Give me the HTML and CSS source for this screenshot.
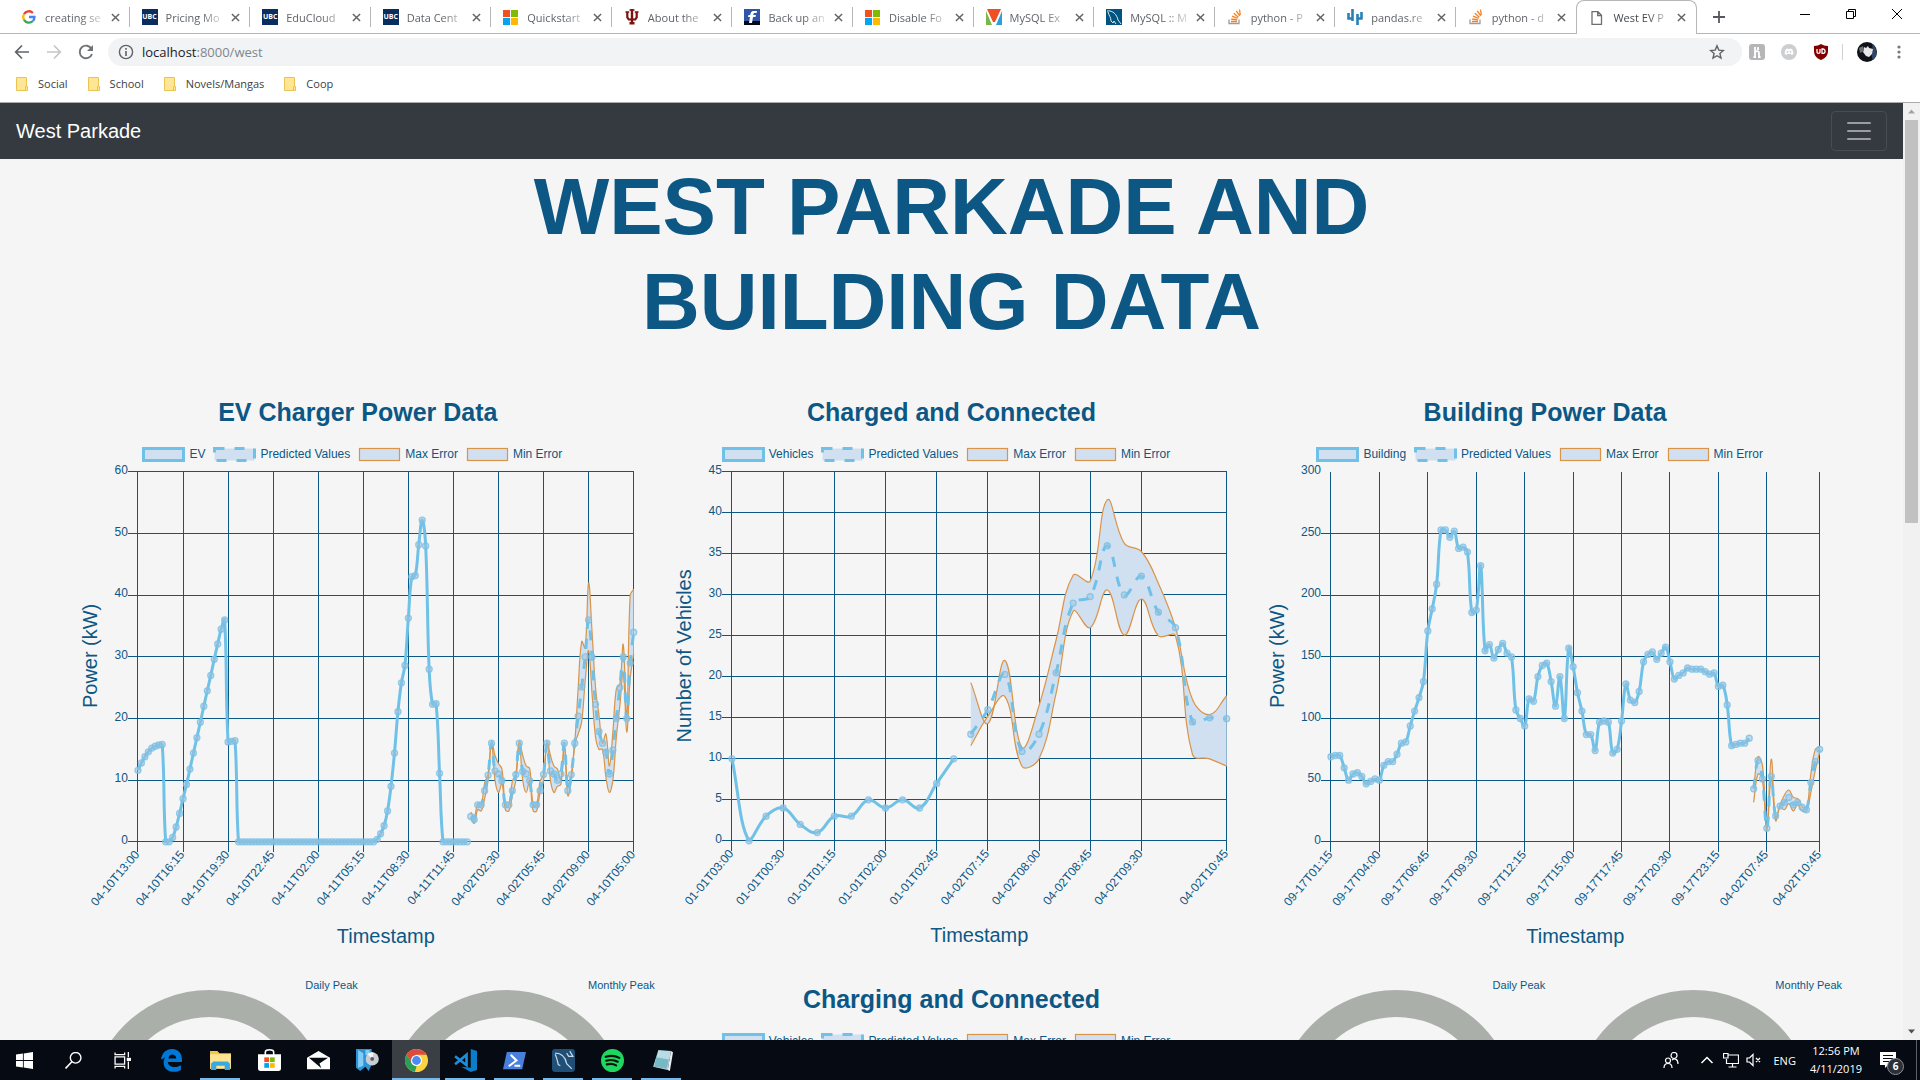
FILE: index.html
```html
<!DOCTYPE html>
<html lang="en">
<head>
<meta charset="utf-8">
<title>West EV Parkade</title>
<link rel="stylesheet" href="styles.css">
</head>
<body>
<svg class="defs" aria-hidden="true">
  <symbol id="ms" viewBox="0 0 16 16"><path fill="#f35020" d="M0 1h7v7H0z"/><path fill="#80bb03" d="M8 1h7v7H8z"/><path fill="#03a5ef" d="M0 9h7v7H0z"/><path fill="#ffb902" d="M8 9h7v7H8z"/></symbol>
  <symbol id="so" viewBox="0 0 16 16"><path fill="none" stroke="#9a9c9f" stroke-width="1.3" d="M2 10.500v4h10v-4"/><path stroke="#f48024" stroke-width="1.300" d="M4 12.500h6M4.200 10l6 .9M5 7.200l5.600 2.200M6.800 4.300l4.600 3.900M9.300 1.800l3.400 5M12.500.5l.8 5.500"/></symbol>
  <symbol id="folder" viewBox="0 0 12 14"><path fill="#ffe594" stroke="#e8c552" d="M.5.5h10v13H.5z"/><path fill="#ffe594" stroke="#e8c552" d="M9.500 9.500h2v4h-2z"/></symbol>
  <symbol id="g-close" viewBox="0 0 10 10"><path stroke="#5f6368" stroke-width="1.600" d="M1 1l8 8M9 1L1 9"/></symbol>
</svg>

<header class="browser">
  <div class="tabstrip">
    <div class="tabs" role="tablist">
      <div class="tab" role="tab"><svg class="fav" viewBox="0 0 16 16"><g fill="none" stroke-width="2.300"><path stroke="#ea4335" d="M3 5.200A5.500 5.500 0 0 1 11.900 4"/><path stroke="#fbbc05" d="M3 5.200a5.600 5.600 0 0 0 0 5.600"/><path stroke="#34a853" d="M3 10.800a5.500 5.500 0 0 0 8.800 1.200"/><path stroke="#4285f4" d="M8 8h5.500c0 1.600-.6 3-1.700 4"/></g></svg><span>creating se</span><button aria-label="Close tab"><svg><use href="#g-close"/></svg></button></div>
      <div class="tab" role="tab"><b class="fav ubc">UBC</b><span>Pricing Mo</span><button aria-label="Close tab"><svg><use href="#g-close"/></svg></button></div>
      <div class="tab" role="tab"><b class="fav ubc">UBC</b><span>EduCloud</span><button aria-label="Close tab"><svg><use href="#g-close"/></svg></button></div>
      <div class="tab" role="tab"><b class="fav ubc">UBC</b><span>Data Cent</span><button aria-label="Close tab"><svg><use href="#g-close"/></svg></button></div>
      <div class="tab" role="tab"><svg class="fav"><use href="#ms"/></svg><span>Quickstart</span><button aria-label="Close tab"><svg><use href="#g-close"/></svg></button></div>
      <div class="tab" role="tab"><svg class="fav" viewBox="0 0 16 16"><path fill="#7d110c" d="M6.800 0h2.400v13h1.300v2.500h-5V13h1.300z"/><path fill="none" stroke="#7d110c" stroke-width="2.200" d="M3.300 3v5.500l1.500 2h6.400l1.500-2V3"/><path stroke="#7d110c" stroke-width="1.500" d="M1.500 3h3.700M10.800 3h3.700M5.500 1h5"/></svg><span>About the</span><button aria-label="Close tab"><svg><use href="#g-close"/></svg></button></div>
      <div class="tab" role="tab"><svg class="fav" viewBox="0 0 16 16"><path fill="#2f56a8" d="M0 0h16v16H0z"/><path fill="#060a14" d="M0 12h16v4H0z"/><path fill="#fff" d="M13 2h-3C7 2 6.600 4 6.300 6H4.500L4 8h2l-1 6h3l1-6h2.500l.4-2H9.300c.2-1.500.4-2 1.500-2h1.800z"/></svg><span>Back up an</span><button aria-label="Close tab"><svg><use href="#g-close"/></svg></button></div>
      <div class="tab" role="tab"><svg class="fav"><use href="#ms"/></svg><span>Disable Fo</span><button aria-label="Close tab"><svg><use href="#g-close"/></svg></button></div>
      <div class="tab" role="tab"><svg class="fav" viewBox="0 0 16 16"><path fill="#f04e23" d="M1 0h14L9 13H7z"/><path fill="#7ab648" d="M0 2l6 14H0z"/><path fill="#2d9fd8" d="M16 2v14h-6z"/></svg><span>MySQL Ex</span><button aria-label="Close tab"><svg><use href="#g-close"/></svg></button></div>
      <div class="tab" role="tab"><svg class="fav" viewBox="0 0 16 16"><path fill="#00547f" d="M0 0h16v16H0z"/><path fill="none" stroke="#dceaf2" d="M1 2c6-1 10 4 11 9l3 4M2 3c1 4 3 5 3 9l2 2 1-2 2 3"/></svg><span>MySQL :: M</span><button aria-label="Close tab"><svg><use href="#g-close"/></svg></button></div>
      <div class="tab" role="tab"><svg class="fav"><use href="#so"/></svg><span>python - P</span><button aria-label="Close tab"><svg><use href="#g-close"/></svg></button></div>
      <div class="tab" role="tab"><svg class="fav" viewBox="0 0 16 16"><path stroke="#2980b9" stroke-width="2.600" fill="none" d="M1.500 4v6M5.500 0v12M10.500 5v11M14.500 3v7M.2 9.500h5M10.500 9.500h5"/></svg><span>pandas.re</span><button aria-label="Close tab"><svg><use href="#g-close"/></svg></button></div>
      <div class="tab" role="tab"><svg class="fav"><use href="#so"/></svg><span>python - d</span><button aria-label="Close tab"><svg><use href="#g-close"/></svg></button></div>
      <div class="tab active" role="tab" aria-selected="true"><svg class="fav" viewBox="0 0 16 16"><path fill="none" stroke="#6b6e72" stroke-width="1.300" d="M3 1.700h6l3.500 3.500v9.100H3zM8.700 2v3.500h3.600"/></svg><span>West EV P</span><button aria-label="Close tab"><svg><use href="#g-close"/></svg></button></div>
    </div>
    <button class="newtab" aria-label="New tab"><svg viewBox="0 0 12 12"><path stroke="#55585c" stroke-width="1.800" d="M6 0v12M0 6h12"/></svg></button>
    <div class="wincontrols">
      <button aria-label="Minimize"><svg viewBox="0 0 10 10"><path stroke="#000" d="M0 5.500h10"/></svg></button>
      <button aria-label="Restore"><svg viewBox="0 0 10 10"><path fill="none" stroke="#000" d="M.5 2.500h7v7h-7zM2.500 2.500v-2h7v7h-2"/></svg></button>
      <button aria-label="Close"><svg viewBox="0 0 10 10"><path stroke="#000" d="M0 0l10 10M10 0L0 10"/></svg></button>
    </div>
  </div>
  <div class="toolbar">
    <button aria-label="Back"><svg viewBox="0 0 16 16"><path fill="none" stroke="#5f6368" stroke-width="1.700" d="M15 8H2M8 1.500L1.700 8 8 14.500"/></svg></button>
    <button aria-label="Forward"><svg viewBox="0 0 16 16"><path fill="none" stroke="#c4c6c9" stroke-width="1.700" d="M1 8h13M8 1.500L14.300 8 8 14.500"/></svg></button>
    <button aria-label="Reload"><svg viewBox="0 0 16 16"><path fill="none" stroke="#6f7276" stroke-width="1.900" d="M13.600 5A6.300 6.300 0 1 0 14 10"/><path fill="#6f7276" d="M15 1v6H9z"/></svg></button>
    <div class="omnibox">
      <svg viewBox="0 0 16 16"><circle cx="8" cy="8" r="6.600" fill="none" stroke="#5f6368" stroke-width="1.400"/><path stroke="#5f6368" stroke-width="1.600" d="M8 7v5M8 4v1.700"/></svg>
      <span class="url" role="textbox" aria-label="Address">localhost<i>:8000/west</i></span>
      <svg viewBox="0 0 16 16"><path fill="none" stroke="#5f6368" stroke-width="1.400" d="M8 1.800l1.800 4.300 4.600.4-3.500 3 1.100 4.600L8 11.700l-4 2.400 1.100-4.600-3.500-3 4.600-.4z"/></svg>
    </div>
    <div class="extensions">
      <svg viewBox="0 0 16 16"><rect width="16" height="16" rx="3" fill="#b5b6b8"/><path fill="none" stroke="#fff" stroke-width="1.800" d="M6 3v10M6 8c1.500-1.500 4-1 4 1v4M9 3v3M4.500 13H7M9 13h2.500"/></svg>
      <svg viewBox="0 0 16 16"><circle cx="8" cy="8" r="8" fill="#cdcecf"/><path fill="#fff" d="M5 5l2-.5.4.6h1.200l.4-.6 2 .5c1 1.500 1.600 3.500 1.300 5.200L10.500 11l-.6-.9H6.100l-.6.9-1.800-.8C3.400 8.500 4 6.500 5 5z"/><path fill="#cdcecf" d="M5.800 7h1.400v1.700H5.800zM8.800 7h1.400v1.700H8.800z"/></svg>
      <svg viewBox="0 0 16 16"><path fill="#800000" d="M8 0c2 1.300 4 2 7 2v5c0 4.500-2.500 7-7 9-4.500-2-7-4.500-7-9V2c3 0 5-.7 7-2z"/><path fill="none" stroke="#fff" stroke-width="1.300" d="M4 5v3.200c0 1.500 3 1.500 3 0V5M9 5v4.300h.8c3 0 3-4.300 0-4.300z"/></svg>
      <span class="divider"></span>
      <svg class="avatar" viewBox="0 0 20 20"><circle cx="10" cy="10" r="10" fill="#0e1118"/><path fill="#2c476b" d="M15 2a10 10 0 0 1 1 16c-3-4 1-10-1-16z"/><path fill="#e9e6e8" d="M7 5l2 1 2-2 1 2 4 1-1 5-3 3-3-1-3-4z"/><path fill="#6b6f78" d="M2 6l4-2 1 5-4 2z"/></svg>
      <svg viewBox="0 0 16 16"><g fill="#77797c"><circle cx="8" cy="3" r="1.600"/><circle cx="8" cy="8" r="1.600"/><circle cx="8" cy="13" r="1.600"/></g></svg>
    </div>
  </div>
  <nav class="bookmarks" aria-label="Bookmarks">
    <a href="#"><svg><use href="#folder"/></svg>Social</a>
    <a href="#"><svg><use href="#folder"/></svg>School</a>
    <a href="#"><svg><use href="#folder"/></svg>Novels/Mangas</a>
    <a href="#"><svg><use href="#folder"/></svg>Coop</a>
  </nav>
</header>

<div class="viewport">
  <div class="page">
    <nav class="navbar">
      <a class="brand" href="#">West Parkade</a>
      <button class="toggler" aria-label="Toggle navigation"><svg viewBox="0 0 30 30"><path stroke="#9a9da0" stroke-width="2" stroke-linecap="round" d="M4 7h22M4 15h22M4 23h22"/></svg></button>
    </nav>
    <main>
      <h1>WEST PARKADE AND<br>BUILDING DATA</h1>
      <div class="grid">
        <section class="card"><h2>EV Charger Power Data</h2><ul class="legend" data-name="EV"></ul><div class="plot" data-chart="ev"></div></section>
        <section class="card"><h2>Charged and Connected</h2><ul class="legend" data-name="Vehicles"></ul><div class="plot" data-chart="vehicles"></div></section>
        <section class="card"><h2>Building Power Data</h2><ul class="legend" data-name="Building"></ul><div class="plot" data-chart="building"></div></section>
        <section class="gauges">
          <div class="gauge"><p>Daily Peak</p><svg viewBox="0 0 297 240"><circle cx="148.500" cy="120.500" r="107"/></svg></div>
          <div class="gauge"><p>Monthly Peak</p><svg viewBox="0 0 297 240"><circle cx="148.500" cy="120.500" r="107"/></svg></div>
        </section>
        <section class="card second"><h2>Charging and Connected</h2><ul class="legend" data-name="Vehicles"></ul></section>
        <section class="gauges">
          <div class="gauge"><p>Daily Peak</p><svg viewBox="0 0 297 240"><circle cx="148.500" cy="120.500" r="107"/></svg></div>
          <div class="gauge"><p>Monthly Peak</p><svg viewBox="0 0 297 240"><circle cx="148.500" cy="120.500" r="107"/></svg></div>
        </section>
      </div>
    </main>
  </div>
  <div class="scrollbar" aria-hidden="true">
    <svg viewBox="0 0 17 17"><path fill="#a3a3a3" d="M5 10.500h7L8.500 6.500z"/></svg>
    <div class="thumb"></div>
    <svg viewBox="0 0 17 17"><path fill="#505050" d="M5 6.500h7l-3.500 4z"/></svg>
  </div>
</div>

<footer class="taskbar">
  <div class="apps">
    <button aria-label="Start"><svg viewBox="0 0 16 16"><path fill="#fff" d="M0 2.300l6.500-.9v6.200H0zM7.300 1.300L16 0v7.600H7.300zM0 8.400h6.500v6.200L0 13.700zM7.300 8.400H16V16l-8.700-1.300z"/></svg></button>
    <button aria-label="Search"><svg viewBox="0 0 16 16"><circle cx="10" cy="5.500" r="5" fill="none" stroke="#fff" stroke-width="1.300"/><path stroke="#fff" stroke-width="1.500" d="M6.500 9.200L.5 15.500"/></svg></button>
    <button aria-label="Task view"><svg viewBox="0 0 16 16"><path fill="none" stroke="#fff" stroke-width="1.200" d="M1 .5v2h9v-2M1 4.500h9v7H1zM1 15.500v-2h9v2M13.500 0v5M13.500 9v7"/><path fill="#fff" d="M12 5.500h4v3h-4z"/></svg></button>
    <button aria-label="Edge"><svg class="big" viewBox="0 0 22 22"><path fill="#0078d7" d="M1 10C1.500 4 6 0 11.500 0 18 0 21 5 21 10v2.500H7.500c.5 5.500 7.500 6 12.500 3V20c-6 3.500-16.500 2.500-16.500-7 0-4 2-6.300 5-7.500C6 7 5 8.500 1 10zM8 9h7.500C15.500 4 8.500 4 8 9z"/></svg></button>
    <button class="open" aria-label="File Explorer"><svg class="big" viewBox="0 0 22 22"><path fill="#f5c64c" d="M1 2h7l2 2h11v4H1z"/><path fill="#ffe592" d="M1 5h20v14H1z"/><path fill="#3aa9e0" d="M2 20v-6l2-2h14l2 2v6h-5v-4H7v4z"/></svg></button>
    <button aria-label="Store"><svg class="big" viewBox="0 0 22 22"><path fill="#fff" d="M0 5h22v14a2 2 0 0 1-2 2H2a2 2 0 0 1-2-2z"/><path fill="none" stroke="#fff" stroke-width="1.500" d="M7 6V3c0-3 8-3 8 0v3"/><path fill="#f25022" d="M6 8h4.500v4.500H6z"/><path fill="#7fba00" d="M11.500 8H16v4.500h-4.500z"/><path fill="#00a4ef" d="M6 13.500h4.500V18H6z"/><path fill="#ffb900" d="M11.500 13.500H16V18h-4.500z"/></svg></button>
    <button aria-label="Mail"><svg class="big" viewBox="0 0 24 22"><path fill="#fff" d="M0 8l12-7 12 7v12H0z"/><path fill="#060b13" d="M2 8h20l-9 6 2 5z"/></svg></button>
    <button aria-label="Disc tool"><svg class="big" viewBox="0 0 22 22"><path fill="#2b93d6" d="M0 0h15v15l-3 6-3-4-5 4-4-3z"/><path fill="#82cdf4" d="M2 1l5 3v12l-5 2zM9 1h4v5H9z"/><circle cx="15.500" cy="9.500" r="6.300" fill="#c9cdd2"/><path fill="#f4f5f6" d="M15.500 9.500L11 5a6 6 0 0 1 6-1.500z"/><circle cx="15.500" cy="9.500" r="1.800" fill="#555b63"/></svg></button>
    <button class="open current" aria-label="Chrome"><svg class="big" viewBox="0 0 22 22"><circle cx="11" cy="11" r="11" fill="#fdd23f"/><path fill="#dd4b3e" d="M1.500 5.500a11 11 0 0 1 19 0H11L6 13z"/><path fill="#2c9e58" d="M1.500 5.500L7 14l4 2.500L9.500 22A11 11 0 0 1 1.500 5.500z"/><circle cx="11" cy="11" r="5.300" fill="#fff"/><circle cx="11" cy="11" r="4.200" fill="#4c8bf5"/></svg></button>
    <button class="open" aria-label="VS Code"><svg class="big" viewBox="0 0 22 22"><path fill="#0b7dc9" d="M16 0l6 2v18l-6 2-9-5 9 1z"/><path fill="none" stroke="#1d8fdc" stroke-width="2.500" d="M1 7l11 8.500v-10L1 14.500"/></svg></button>
    <button class="open" aria-label="PowerShell"><svg class="big" viewBox="0 0 24 22"><path fill="#4a7fdc" d="M4 2h20l-4 18H0z"/><path fill="none" stroke="#fff" stroke-width="2.200" d="M8 5l6 6-8 6M12 16.500h6"/></svg></button>
    <button class="open" aria-label="MySQL Workbench"><svg class="big" viewBox="0 0 22 22"><rect width="22" height="22" rx="3" fill="#1f4f76"/><path fill="none" stroke="#c9d7e2" stroke-width="1.200" d="M3 4c7 0 10 5 11 10l5 5M3 5c2 4 2 6 3 10l2 1M14 4l2 3h4l-3-5"/></svg></button>
    <button class="open" aria-label="Spotify"><svg class="big" viewBox="0 0 22 22"><circle cx="11" cy="11" r="11" fill="#1ed760"/><path fill="none" stroke="#06120a" stroke-width="2" stroke-linecap="round" d="M4.500 7.500c4-1.300 9.500-1 13 1M5 11.200c3.500-1 8-.7 11 1M5.500 14.700c3-.8 6.500-.5 9 1"/></svg></button>
    <button class="open" aria-label="Notepad"><svg class="big" viewBox="0 0 22 22"><path fill="#b8dce4" d="M8 1l12 1-3 18-14-3z"/><path fill="#78b7c4" d="M6 8l12 2-2 9-12-2z"/><path fill="#e9eef0" d="M20 2l2 1-3 18-2-1z"/></svg></button>
  </div>
  <div class="tray">
    <svg viewBox="0 0 16 16" class="w-people"><g fill="none" stroke="#fff" stroke-width="1.200"><circle cx="11" cy="3.500" r="3"/><circle cx="5" cy="8.500" r="2.500"/><path d="M1 16c0-6 8-6 8 0M9 8c3-2 6-1 6 4"/></g></svg>
    <svg viewBox="0 0 16 16" class="w-chev"><path fill="none" stroke="#fff" stroke-width="1.500" d="M2.500 11L8 5.500l5.500 5.500"/></svg>
    <svg viewBox="0 0 16 16" class="w-net"><path fill="none" stroke="#fff" stroke-width="1.200" d="M5 3h10.500v8.500H3.500V7M9.500 11.500V15M5.500 15h8M.5 1.500H5V6H.5z"/></svg>
    <svg viewBox="0 0 16 16" class="w-vol"><path fill="none" stroke="#fff" stroke-width="1.200" d="M1 6h2.500L7 2.500v11L3.500 10H1zM10 6l4 4M14 6l-4 4"/></svg>
    <span class="lang">ENG</span>
    <time class="clock">12:56 PM<br>4/11/2019</time>
    <span class="notify"><svg viewBox="0 0 16 16"><path fill="#fff" d="M0 0h16v13H8l-3 3v-3H0z"/><path stroke="#060b13" stroke-width="1.200" d="M3 3.500h10M3 6.500h10M3 9.500h6"/></svg><b>6</b></span>
    <span class="peek"></span>
  </div>
</footer>
<script src="charts.js"></script>
</body>
</html>
```
FILE: styles.css
```css
* { box-sizing: border-box; }
body {
  margin: 0;
  height: 100vh;
  display: flex;
  flex-direction: column;
  overflow: hidden;
  background: #f5f5f5;
  font-family: "Liberation Sans", Arial, sans-serif;
}
button { border: 0; padding: 0; background: none; font: inherit; }
svg { display: block; flex: none; }
.defs { position: absolute; width: 0; height: 0; }

/* Browser chrome */
.browser { flex: none; background: #fff; border-bottom: 1px solid #a9abad; font-family: "Open Sans", "Noto Sans", sans-serif; }
.tabstrip { display: flex; height: 34px; padding-left: 9px; border-bottom: 1px solid #b4b6b8; }
.tabs { display: grid; grid-template-columns: repeat(14, minmax(0, 1fr)); flex: 0 1 1688px; height: 34px; }
.tab { display: flex; align-items: center; position: relative; padding: 0 10px 0 12px; font-size: 11px; color: #5f6368; }
.tab::after { content: ""; position: absolute; right: 0; top: 7px; height: 20px; width: 1px; background: #b4b6b8; }
.tab:nth-child(13)::after { display: none; }
.fav { flex: none; width: 16px; height: 16px; margin-right: 8px; }
.ubc { background: #0a2d5f; color: #fff; font-size: 7px; line-height: 16px; text-align: center; }
.tab span { flex: 1; min-width: 0; margin-right: 6px; white-space: nowrap; -webkit-mask-image: linear-gradient(to right, #000 60%, transparent 105%); mask-image: linear-gradient(to right, #000 60%, transparent 105%); }
.tab button svg { width: 9px; height: 9px; }
.tab.active { background: #fff; color: #45494d; border: 1px solid #b4b6b8; border-bottom: 0; border-radius: 8px 8px 0 0; }
.tab.active::after { display: none; }
.newtab { width: 44px; display: grid; place-items: center; }
.newtab svg { width: 12px; height: 12px; }
.wincontrols { margin-left: auto; display: flex; padding-bottom: 5px; }
.wincontrols button { width: 46px; display: grid; place-items: center; }
.wincontrols svg { width: 10px; height: 10px; }

.toolbar { display: flex; align-items: center; height: 36px; padding: 0 13px 0 6px; }
.toolbar > button { width: 32px; height: 32px; display: grid; place-items: center; }
.toolbar svg { width: 16px; height: 16px; }
.omnibox { flex: 1; display: flex; align-items: center; gap: 8px; height: 28px; margin-left: 6px; padding: 0 17px 0 10px; border-radius: 14px; background: #f1f3f4; font-size: 13px; color: #202124; }
.url { flex: 1; }
.url i { font-style: normal; color: #80868b; }
.extensions { display: flex; align-items: center; gap: 16px; padding-left: 7px; margin-left: 7px; margin-right: 0; }
.omnibox + .extensions { margin-left: 0; }
.divider { width: 1px; height: 16px; background: #cfd1d3; margin-left: -3px; }
.toolbar .avatar { width: 20px; height: 20px; margin: 0 -2px; }

.bookmarks { display: flex; gap: 20px; height: 32px; padding: 0 16px; }
.bookmarks a { display: flex; align-items: center; gap: 10px; height: 27px; font-size: 11px; color: #3c4043; text-decoration: none; }
.bookmarks svg { width: 12px; height: 14px; }

/* Page */
.viewport { flex: 1; min-height: 0; display: flex; }
.page { flex: 1; min-width: 0; overflow: hidden; color: #0c5784; }
.navbar { display: flex; justify-content: space-between; align-items: center; height: 56px; padding: 0 16px; background: #343a40; }
.brand { color: #fff; font-size: 20px; text-decoration: none; }
.toggler { width: 56px; height: 40px; display: grid; place-items: center; border: 1px solid #484d53; border-radius: 4px; }
.toggler svg { width: 30px; height: 30px; }
h1 { margin: 0; font-size: 80px; line-height: 95px; text-align: center; }
.grid { display: grid; grid-template-columns: repeat(3, minmax(0, 1fr)); padding: 48px 61px 0; }
h2 { margin: 0 0 16px; font-size: 25px; line-height: 30px; text-align: center; }
.second { padding-top: 7px; }
.legend { display: flex; justify-content: center; align-items: center; height: 22px; margin: 0 0 1px; padding: 0 11px 0 0; list-style: none; font-size: 12px; }
.legend li { display: flex; align-items: center; gap: 4px; margin-right: 8px; }
.legend li:last-child { margin-right: 0; }
.legend svg { width: 43px; height: 15px; }
.plot svg { width: 100%; overflow: visible; }
.plot text { fill: #0c5784; font-size: 12px; }
.plot .axis-title { font-size: 20px; text-anchor: middle; }
.tick { text-anchor: end; }
.grid-line { stroke: #0c5784; stroke-width: 1; shape-rendering: crispEdges; }
.swatch, .band { fill: #d1e0f0; }
.actual, .predicted { fill: none; stroke: #70c1e7; stroke-width: 3; }
.predicted { stroke-dasharray: 10 10; }
.swatch.actual, .swatch.predicted { fill: #d1e0f0; }
.error { fill: none; stroke: #d99449; stroke-width: 1.2; }
.swatch.error { fill: #d1e0f0; }
.dot { fill: #9dbfdc; fill-opacity: .5; stroke: #78c0e6; stroke-opacity: .8; stroke-width: 1.3; }
.gauges { display: flex; }
.gauge { flex: 1; min-width: 0; }
.gauge p { margin: 0; font-size: 11px; line-height: 16px; text-align: right; }
.gauge svg { width: 100%; margin-top: -3px; }
.gauge circle { fill: none; stroke: #aab0a9; stroke-width: 27; }

.scrollbar { flex: none; width: 17px; display: flex; flex-direction: column; background: #f1f1f1; }
.scrollbar svg { width: 17px; height: 17px; }
.thumb { height: 43%; margin: 0 2px auto; background: #c1c1c1; }

/* Taskbar */
.taskbar { flex: none; display: flex; justify-content: space-between; height: 40px; background: #060b13; color: #fff; font-family: "Open Sans", "Noto Sans", sans-serif; font-size: 11px; }
.apps { display: flex; gap: 1px; }
.apps button { position: relative; width: 48px; display: grid; place-items: center; }
.apps svg { width: 17px; height: 17px; }
.apps .big { width: 23px; height: 23px; }
.apps .open::after { content: ""; position: absolute; left: 4px; right: 4px; bottom: 0; height: 2px; background: #76b9ed; }
.apps .current { background: #3a3e45; }
.apps .current::after { left: 0; right: 0; }
.tray { display: flex; align-items: center; }
.tray svg { width: 16px; height: 16px; }
.w-people { margin-right: 20px; }
.w-chev { margin-right: 8px; }
.w-net { margin-right: 7px; }
.w-vol { margin-right: 11px; }
.lang { margin-right: 14px; }
.clock { text-align: center; line-height: 18px; }
.notify { position: relative; margin: 0 20px 0 18px; }
.notify b { position: absolute; left: 7px; top: 6px; width: 17px; height: 17px; border: 1px solid #8b8f95; border-radius: 50%; background: #2b2f36; font-size: 10px; line-height: 15px; text-align: center; }
.peek { width: 4px; height: 40px; border-left: 1px solid #5b6068; }
```
FILE: charts.js
```js
const zeros = n => Array(n).fill(0);

const charts = {
  ev: {
    left: 77, right: 573, bottom: 376, top: 6, max: 60, step: 10, y: 'Power (kW)', topLine: true,
    labels: ['04-10T13:00', '04-10T16:15', '04-10T19:30', '04-10T22:45', '04-11T02:00', '04-11T05:15', '04-11T08:30', '04-11T11:45', '04-02T02:30', '04-02T05:45', '04-02T09:00', '04-10T05:00'],
    ticks: [0, 13, 26, 39, 52, 65, 78, 91, 104, 117, 130, 143],
    actual: [11.6, 12.8, 13.8, 14.6, 15.2, 15.5, 15.7, 15.8, 0, 0, .7, 2.4, 4.6, 7, 9.3, 11.8, 14.4, 16.9, 19.4, 22, 24.5, 27, 29.6, 32.1, 34.5, 36, 16.2, 16.3, 16.4,
      ...zeros(40), .4, 1.3, 2.6, 5, 9, 14.4, 21.1, 25.8, 28.6, 36.3, 43, 43.2, 48.2, 52.2, 48, 28, 22.3, 22.4, 11.1, ...zeros(8)],
    predicted: [4.1, 3.6, 6, 6, 8.3, 10.8, 16, 11.5, 11, 9.9, 6, 6, 8.3, 10.9, 16, 11.4, 11, 9.9, 6, 6, 8.3, 10.9, 16, 11.5, 11, 10, 11, 16, 8.3, 10.9, 16, 20.4, 25.1, 30, 36, 30, 22.3, 17.9, 16, 14.5, 11, 14.9, 20, 25, 30, 20, 29, 34],
    high: [4.8, 4, 6.2, 6, 9.5, 11, 16.3, 14, 12.7, 11.8, 6, 6, 9.8, 11, 16.3, 14, 12.3, 11.9, 6, 6, 9.8, 11, 16.3, 14, 12.3, 11.8, 10, 16, 9, 11, 16, 25, 32.5, 31.5, 42, 34, 25, 20.5, 16, 17.5, 12.3, 17.8, 24.8, 25.5, 32, 20, 40, 41],
    low: [4, 3, 5.2, 5, 7, 10, 16, 10, 8, 9.5, 5.2, 5, 7.5, 10, 16, 10, 8, 10, 5, 5, 8, 10, 16, 10, 8, 9, 9.3, 15.5, 7.5, 10, 15.8, 17.5, 19.5, 26, 31, 24, 17, 15, 15, 10.5, 8, 10, 17, 22, 27.5, 17.8, 26.5, 30.5]
  },
  vehicles: {
    left: 77, right: 572, bottom: 375, top: 6, max: 45, step: 5, y: 'Number of Vehicles', topLine: true,
    labels: ['01-01T03:00', '01-01T00:30', '01-01T01:15', '01-01T02:00', '01-01T02:45', '04-02T07:15', '04-02T08:00', '04-02T08:45', '04-02T09:30', '04-02T10:45'],
    ticks: [0, 3, 6, 9, 12, 15, 18, 21, 24, 29],
    actual: [10, 0, 3, 4, 2, 1, 3, 3, 5, 4, 5, 4, 7, 10],
    predicted: [13, 16, 20.3, 10.9, 13, 20.5, 29, 29.8, 36, 30, 32.3, 27.9, 26, 14.5, 15, 14.9],
    high: [19.3, 14.3, 22, 11.4, 16.5, 24.5, 32.4, 31.7, 41.6, 36.3, 35.3, 31.4, 26, 17.2, 15.4, 17.7],
    low: [11.6, 15.2, 17.6, 9.1, 10, 18, 28, 26, 30.6, 25.1, 29.5, 25, 25, 10.5, 10, 9.1]
  },
  building: {
    left: 83, right: 572, bottom: 376, top: 6, max: 300, step: 50, y: 'Power (kW)', topLine: false,
    labels: ['09-17T01:15', '09-17T04:00', '09-17T06:45', '09-17T09:30', '09-17T12:15', '09-17T15:00', '09-17T17:45', '09-17T20:30', '09-17T23:15', '04-02T07:45', '04-02T10:45'],
    ticks: [0, 11, 22, 33, 44, 55, 66, 77, 88, 99, 111],
    actual: [69, 70, 70, 60, 50, 55, 56, 53, 47, 49, 51, 50, 62, 65, 65, 71, 80, 81, 94, 106, 117, 130, 171, 189, 209, 253, 253, 247, 252, 238, 239, 235, 186, 188, 224, 155, 160, 149, 156, 161, 153, 150, 107, 100, 94, 116, 114, 134, 143, 145, 130, 110, 134, 100, 157, 142, 121, 106, 87, 87, 74, 97, 98, 97, 72, 75, 98, 128, 115, 113, 122, 146, 152, 154, 148, 153, 158, 146, 132, 135, 137, 141, 140, 140, 140, 138, 136, 137, 126, 127, 111, 78, 79, 80, 80, 84],
    predicted: [43, 66, 51, 11, 53, 21, 29, 32, 36, 30, 32, 28, 26, 48, 65, 75],
    high: [43, 69, 62, 12, 67, 20, 30, 38, 42, 36, 35, 29, 26, 55, 75, 77],
    low: [32, 55, 50, 9, 52, 17, 28, 26, 31, 25, 30, 25, 25, 40, 58, 73]
  }
};

// Cubic spline through the points, with control points kept inside the plot area.
function spline(p, c, start = 'M') {
  const clamp = y => Math.max(c.top, Math.min(c.bottom, y));
  const ctrl = p.map((q, i) => {
    const a = p[i - 1] || q, b = p[i + 1] || q;
    const d1 = Math.hypot(q[0] - a[0], q[1] - a[1]), d2 = Math.hypot(b[0] - q[0], b[1] - q[1]);
    const f1 = .4 * d1 / (d1 + d2), f2 = .4 * d2 / (d1 + d2);
    return [[q[0] - f1 * (b[0] - a[0]), clamp(q[1] - f1 * (b[1] - a[1]))], [q[0] + f2 * (b[0] - a[0]), clamp(q[1] + f2 * (b[1] - a[1]))]];
  });
  let d = start + p[0];
  for (let i = 1; i < p.length; i++) d += 'C' + [ctrl[i - 1][1], ctrl[i][0], p[i]].join(' ');
  return d;
}

function draw(c) {
  const n = c.ticks[c.ticks.length - 1];
  const X = i => c.left + (c.right - c.left) * i / n;
  const Y = v => c.bottom - (c.bottom - c.top) * v / c.max;
  const pts = (a, off) => a.map((v, i) => [X(i + off), Y(v)]);
  const off = c.actual.length;
  let s = '';
  for (let v = 0; v <= c.max; v += c.step) {
    if (v < c.max || c.topLine) s += `<path class="grid-line" d="M${c.left - 10} ${Y(v)}H${c.right}"/>`;
    s += `<text class="tick" x="${c.left - 10}" y="${Y(v) + 2}">${v}</text>`;
  }
  c.ticks.forEach((t, i) => {
    s += `<path class="grid-line" d="M${X(t)} ${c.top}V${c.bottom + 10}"/>`;
    s += `<text class="tick" transform="translate(${X(t) + 2} ${c.bottom + 13}) rotate(-50)">${c.labels[i]}</text>`;
  });
  const hi = pts(c.high, off), lo = pts(c.low, off), pr = pts(c.predicted, off), ac = pts(c.actual, 0);
  s += `<path class="band" d="${spline(hi, c)}${spline([...lo].reverse(), c, 'L')}Z"/>`;
  s += `<path class="error" d="${spline(hi, c)}"/><path class="error" d="${spline(lo, c)}"/>`;
  s += `<path class="predicted" d="${spline(pr, c)}"/><path class="actual" d="${spline(ac, c)}"/>`;
  [...ac, ...pr].forEach(q => { s += `<circle class="dot" cx="${q[0]}" cy="${q[1]}" r="3"/>`; });
  const mid = (c.left + c.right) / 2;
  s += `<text class="axis-title" x="${mid}" y="${c.bottom + 101}">Timestamp</text>`;
  s += `<text class="axis-title" transform="translate(36 190) rotate(-90)">${c.y}</text>`;
  return `<svg viewBox="0 0 594 511" role="img" aria-label="${c.y} by timestamp">${s}</svg>`;
}

document.querySelectorAll('.plot').forEach(el => { el.innerHTML = draw(charts[el.dataset.chart]); });
document.querySelectorAll('.legend').forEach(el => {
  const items = [[el.dataset.name, 'actual'], ['Predicted Values', 'predicted'], ['Max Error', 'error'], ['Min Error', 'error']];
  el.innerHTML = items.map(([t, k]) => `<li><svg viewBox="0 0 43 15"><rect class="swatch ${k}" x="1.500" y="1.500" width="40" height="12"/></svg>${t}</li>`).join('');
});
```
